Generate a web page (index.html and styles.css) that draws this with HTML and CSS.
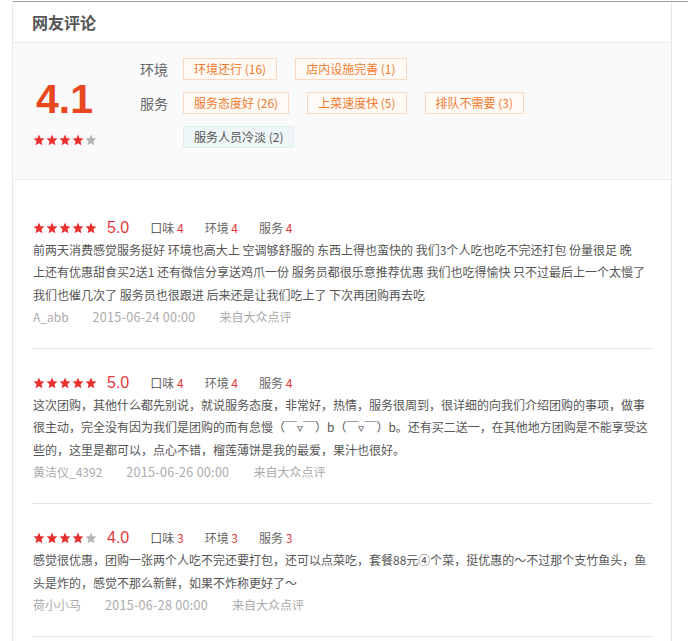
FILE: index.html
```html
<!DOCTYPE html>
<html lang="zh-CN">
<head>
<meta charset="utf-8">
<title>网友评论</title>
<link rel="stylesheet" href="styles.css">
</head>
<body>
<svg width="0" height="0" class="defs" aria-hidden="true">
  <defs>
    <polygon id="star" points="12,1 15.1,8.3 23,9.2 17,14.5 18.8,22.3 12,18.3 5.2,22.3 7,14.5 1,9.2 8.9,8.3"/>
  </defs>
</svg>
<div class="frame">
  <div class="topline"></div>
  <div class="inner">
    <h2 class="title">网友评论</h2>
    <div class="summary">
      <div class="score">
        <div class="score-num">4.1</div>
        <div class="stars">
          <svg viewBox="0 0 24 24"><use href="#star" class="on"/></svg>
          <svg viewBox="0 0 24 24"><use href="#star" class="on"/></svg>
          <svg viewBox="0 0 24 24"><use href="#star" class="on"/></svg>
          <svg viewBox="0 0 24 24"><use href="#star" class="on"/></svg>
          <svg viewBox="0 0 24 24"><use href="#star" class="off"/></svg>
        </div>
      </div>
      <div class="tags">
        <div class="tag-row">
          <span class="tag-label">环境</span>
          <span class="tag pos">环境还行 (16)</span>
          <span class="tag pos">店内设施完善 (1)</span>
        </div>
        <div class="tag-row">
          <span class="tag-label">服务</span>
          <span class="tag pos">服务态度好 (26)</span>
          <span class="tag pos">上菜速度快 (5)</span>
          <span class="tag pos">排队不需要 (3)</span>
        </div>
        <div class="tag-row">
          <span class="tag-label"></span>
          <span class="tag neg">服务人员冷淡 (2)</span>
        </div>
      </div>
    </div>

    <ul class="reviews">
      <li class="review">
        <div class="review-head">
          <div class="stars">
            <svg viewBox="0 0 24 24"><use href="#star" class="on"/></svg>
            <svg viewBox="0 0 24 24"><use href="#star" class="on"/></svg>
            <svg viewBox="0 0 24 24"><use href="#star" class="on"/></svg>
            <svg viewBox="0 0 24 24"><use href="#star" class="on"/></svg>
            <svg viewBox="0 0 24 24"><use href="#star" class="on"/></svg>
          </div>
          <span class="rate">5.0</span>
          <span class="sub">口味 <em>4</em></span>
          <span class="sub">环境 <em>4</em></span>
          <span class="sub">服务 <em>4</em></span>
        </div>
        <p class="review-text">前两天消费感觉服务挺好 环境也高大上 空调够舒服的 东西上得也蛮快的 我们3个人吃也吃不完还打包 份量很足 晚<br>上还有优惠甜食买2送1 还有微信分享送鸡爪一份 服务员都很乐意推荐优惠 我们也吃得愉快 只不过最后上一个太慢了<br>我们也催几次了 服务员也很跟进 后来还是让我们吃上了 下次再团购再去吃</p>
        <div class="meta"><span>A_abb</span><span class="date">2015-06-24 00:00</span><span>来自大众点评</span></div>
      </li>
      <li class="review">
        <div class="review-head">
          <div class="stars">
            <svg viewBox="0 0 24 24"><use href="#star" class="on"/></svg>
            <svg viewBox="0 0 24 24"><use href="#star" class="on"/></svg>
            <svg viewBox="0 0 24 24"><use href="#star" class="on"/></svg>
            <svg viewBox="0 0 24 24"><use href="#star" class="on"/></svg>
            <svg viewBox="0 0 24 24"><use href="#star" class="on"/></svg>
          </div>
          <span class="rate">5.0</span>
          <span class="sub">口味 <em>4</em></span>
          <span class="sub">环境 <em>4</em></span>
          <span class="sub">服务 <em>4</em></span>
        </div>
        <p class="review-text">这次团购，其他什么都先别说，就说服务态度，非常好，热情，服务很周到，很详细的向我们介绍团购的事项，做事<br>很主动，完全没有因为我们是团购的而有怠慢（￣▿￣）b（￣▿￣）b。还有买二送一，在其他地方团购是不能享受这<br>些的，这里是都可以，点心不错，榴莲薄饼是我的最爱，果汁也很好。</p>
        <div class="meta"><span>黄洁仪_4392</span><span class="date">2015-06-26 00:00</span><span>来自大众点评</span></div>
      </li>
      <li class="review">
        <div class="review-head">
          <div class="stars">
            <svg viewBox="0 0 24 24"><use href="#star" class="on"/></svg>
            <svg viewBox="0 0 24 24"><use href="#star" class="on"/></svg>
            <svg viewBox="0 0 24 24"><use href="#star" class="on"/></svg>
            <svg viewBox="0 0 24 24"><use href="#star" class="on"/></svg>
            <svg viewBox="0 0 24 24"><use href="#star" class="off"/></svg>
          </div>
          <span class="rate">4.0</span>
          <span class="sub">口味 <em>3</em></span>
          <span class="sub">环境 <em>3</em></span>
          <span class="sub">服务 <em>3</em></span>
        </div>
        <p class="review-text">感觉很优惠，团购一张两个人吃不完还要打包，还可以点菜吃，套餐88元④个菜，挺优惠的～不过那个支竹鱼头，鱼<br>头是炸的，感觉不那么新鲜，如果不炸称更好了～</p>
        <div class="meta"><span>荷小小马</span><span class="date">2015-06-28 00:00</span><span>来自大众点评</span></div>
      </li>
    </ul>
  </div>
</div>
</body>
</html>
```

FILE: styles.css
```css
* { box-sizing: border-box; }

html, body {
  margin: 0;
  padding: 0;
  background: #fff;
}

body {
  font-family: "Noto Sans CJK SC", "Microsoft YaHei", sans-serif;
  font-size: 12px;
  color: #555;
}

.defs {
  position: absolute;
  width: 0;
  height: 0;
}

.frame {
  margin-left: 12px;
  border-left: 1px solid #e6e6e6;
  min-height: 641px;
}

.topline {
  margin-top: 1px;
  height: 1px;
  background: #a0a0a0;
}

.inner {
  width: 659px;
  border-right: 1px solid #e6e6e6;
  min-height: 639px;
}

.title {
  margin: 0;
  height: 40px;
  line-height: 40px;
  padding-left: 19px;
  font-size: 16px;
  font-weight: bold;
  color: #555;
}

.summary {
  display: flex;
  height: 138px;
  padding-top: 15px;
  margin-left: -1px;
  background: #fafafa;
  border: 1px solid #ebebeb;
  border-right: none;
}

.score {
  width: 103px;
  padding-top: 19px;
  display: flex;
  flex-direction: column;
  align-items: center;
}

.score-num {
  font-family: "Liberation Sans", Arial, sans-serif;
  font-size: 41px;
  font-weight: bold;
  line-height: 44px;
  color: #e8481f;
}

.stars {
  display: flex;
  gap: 1px;
}

.stars svg {
  width: 12px;
  height: 12px;
  display: block;
}

.stars .on { fill: #e8302f; }
.stars .off { fill: #b4b4b4; }

.score .stars {
  margin-top: 13px;
}

.tags {
  margin-left: 24px;
}

.tag-row {
  display: flex;
  align-items: center;
  height: 22px;
  margin-bottom: 12px;
}

.tag-label {
  width: 43px;
  font-size: 14px;
  color: #666;
}

.tag {
  height: 22px;
  line-height: 20px;
  padding: 0 10px;
  margin-right: 18px;
  font-size: 12px;
  border: 1px solid #f8d9c6;
  white-space: nowrap;
}

.tag.pos {
  color: #f07a2e;
  background: #fffaf6;
}

.tag.neg {
  color: #555;
  background: #eef6f7;
  border-color: #e2eef0;
}

.reviews {
  list-style: none;
  margin: 0 19px 0 19px;
  padding: 14px 0 0;
}

.review {
  padding: 22px 0 20px 1px;
  border-bottom: 1px solid #e5e5e5;
}

.review-head {
  display: flex;
  align-items: center;
  height: 23px;
}

.rate {
  margin-left: 10px;
  margin-right: 21px;
  font-family: "Liberation Sans", Arial, sans-serif;
  font-size: 16px;
  color: #e4393c;
}

.sub {
  margin-right: 21px;
  font-size: 12px;
  color: #666;
}

.sub em {
  font-style: normal;
  color: #e4393c;
}

.review-text {
  margin: 0;
  line-height: 22.3px;
  white-space: nowrap;
  color: #555;
}

.meta {
  line-height: 22.3px;
  color: #aaa;
  font-size: 12px;
}

.meta span {
  margin-right: 24px;
}

.meta .date {
  font-size: 12.5px;
  letter-spacing: 0.3px;
}
```
